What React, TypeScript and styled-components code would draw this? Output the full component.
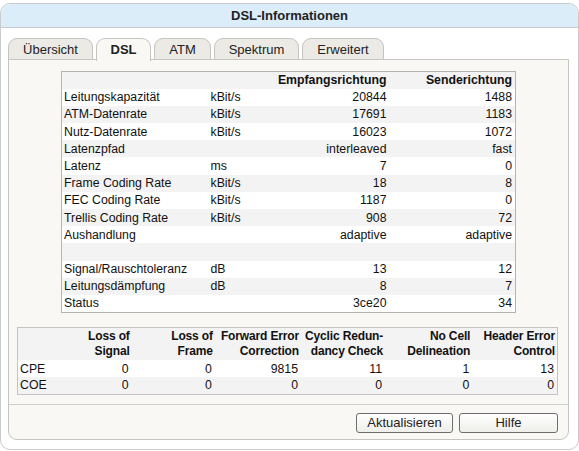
import React from "react";
import styled, { createGlobalStyle } from "styled-components";

const Global = createGlobalStyle`
  html, body { margin: 0; padding: 0; background: #ffffff; }
  body { font-family: "Liberation Sans", Arial, sans-serif; color: #111; }
`;

const Frame = styled.div`
  box-sizing: border-box;
  margin-top: 3px;
  width: 579px;
  height: 447px;
  border: 1px solid #c9cbcc;
  border-radius: 10px;
  overflow: hidden;
  background: #ffffff;
  display: flex;
  flex-direction: column;
`;

const TitleBar = styled.div`
  height: 23px;
  background: #dcedfa;
  border-bottom: 1px solid #c4cdd3;
  display: flex;
  align-items: center;
  justify-content: center;
  font-weight: bold;
  font-size: 13px;
  color: #222;
`;

const Body = styled.div`
  padding: 10px 9px 0 7px;
  display: flex;
  flex-direction: column;
`;

const TabRow = styled.div`
  display: flex;
  gap: 3px;
  height: 22px;
  position: relative;
  z-index: 1;
`;

const Tab = styled.div<{ $w: number; $active?: boolean }>`
  box-sizing: border-box;
  width: ${(p) => p.$w}px;
  height: ${(p) => (p.$active ? 23 : 22)}px;
  border: 1px solid #c4c4c0;
  border-bottom: ${(p) => (p.$active ? "none" : "1px solid #c4c4c0")};
  border-radius: 9px 9px 0 0;
  background: ${(p) => (p.$active ? "#f9f8f4" : "#ebeae5")};
  font-size: 13px;
  font-weight: ${(p) => (p.$active ? "bold" : "normal")};
  color: #222;
  display: flex;
  align-items: center;
  justify-content: center;
  padding-bottom: ${(p) => (p.$active ? 1 : 0)}px;
`;

const Panel = styled.div`
  box-sizing: border-box;
  height: 381px;
  margin-top: -1px;
  border: 1px solid #c4c4c0;
  border-radius: 0 0 9px 9px;
  background: #f9f8f4;
  display: flex;
  flex-direction: column;
  padding-top: 11px;
`;

const InfoTable = styled.table`
  border-collapse: collapse;
  table-layout: fixed;
  width: 454px;
  margin-left: 52px;
  border: 1px solid #b4b4b4;
  font-size: 12.3px;
`;

const Row = styled.tr<{ $alt?: boolean; $h?: number }>`
  height: ${(p) => p.$h ?? 17}px;
  background: ${(p) => (p.$alt ? "#f3f3f3" : "#ffffff")};
`;

const Cell = styled.td<{ $right?: boolean; $bold?: boolean }>`
  padding: 0 2px 0 2px;
  padding-right: ${(p) => (p.$right ? 3 : 2)}px;
  text-align: ${(p) => (p.$right ? "right" : "left")};
  font-weight: ${(p) => (p.$bold ? "bold" : "normal")};
  white-space: nowrap;
  vertical-align: middle;
  line-height: 14px;
`;

const ErrTable = styled.table`
  border-collapse: collapse;
  table-layout: fixed;
  width: 541px;
  margin: 14px 0 0 8px;
  border: 1px solid #c4c4c4;
  font-size: 12.3px;
`;

const HeadCell = styled.th`
  padding: 0 2px 0 0;
  text-align: right;
  font-weight: bold;
  line-height: 14.5px;
  vertical-align: middle;
  white-space: nowrap;
  font-size: 12px;
  letter-spacing: -0.15px;
`;

const Separator = styled.div`
  height: 1px;
  background: #cfcfcb;
  margin-top: 9px;
`;

const ButtonBar = styled.div`
  display: flex;
  justify-content: flex-end;
  gap: 6px;
  padding: 8px 10px 0 0;
`;

const Button = styled.button<{ $w: number }>`
  box-sizing: border-box;
  width: ${(p) => p.$w}px;
  height: 20px;
  border: 1px solid #6f6f6f;
  border-radius: 3px;
  background: linear-gradient(#ffffff, #eeeeea);
  font-family: "Liberation Sans", Arial, sans-serif;
  font-size: 13px;
  color: #222;
  padding: 0;
  display: flex;
  align-items: center;
  justify-content: center;
`;

const rows: [string, string, string, string][] = [
  ["Leitungskapazität", "kBit/s", "20844", "1488"],
  ["ATM-Datenrate", "kBit/s", "17691", "1183"],
  ["Nutz-Datenrate", "kBit/s", "16023", "1072"],
  ["Latenzpfad", "", "interleaved", "fast"],
  ["Latenz", "ms", "7", "0"],
  ["Frame Coding Rate", "kBit/s", "18", "8"],
  ["FEC Coding Rate", "kBit/s", "1187", "0"],
  ["Trellis Coding Rate", "kBit/s", "908", "72"],
  ["Aushandlung", "", "adaptive", "adaptive"],
  ["", "", "", ""],
  ["Signal/Rauschtoleranz", "dB", "13", "12"],
  ["Leitungsdämpfung", "dB", "8", "7"],
  ["Status", "", "3ce20", "34"],
];

const errHeads: [string, string][] = [
  ["Loss of", "Signal"],
  ["Loss of", "Frame"],
  ["Forward Error", "Correction"],
  ["Cyclic Redun-", "dancy Check"],
  ["No Cell", "Delineation"],
  ["Header Error", "Control"],
];

const errRows: [string, string[]][] = [
  ["CPE", ["0", "0", "9815", "11", "1", "13"]],
  ["COE", ["0", "0", "0", "0", "0", "0"]],
];

const tabs: { label: string; w: number; active?: boolean }[] = [
  { label: "Übersicht", w: 85 },
  { label: "DSL", w: 55, active: true },
  { label: "ATM", w: 57 },
  { label: "Spektrum", w: 85 },
  { label: "Erweitert", w: 82 },
];

export default function App() {
  return (
    <>
      <Global />
      <Frame>
        <TitleBar>DSL-Informationen</TitleBar>
        <Body>
          <TabRow>
            {tabs.map((t) => (
              <Tab key={t.label} $w={t.w} $active={t.active}>
                {t.label}
              </Tab>
            ))}
          </TabRow>
          <Panel>
            <InfoTable>
              <colgroup>
                <col style={{ width: 147 }} />
                <col style={{ width: 60 }} />
                <col style={{ width: 121 }} />
                <col style={{ width: 126 }} />
              </colgroup>
              <tbody>
                <Row $alt $h={17.2}>
                  <Cell />
                  <Cell />
                  <Cell $right $bold>
                    Empfangsrichtung
                  </Cell>
                  <Cell $right $bold>
                    Senderichtung
                  </Cell>
                </Row>
                {rows.map((r, i) => (
                  <Row key={i} $alt={i % 2 === 1} $h={17.2}>
                    <Cell>{r[0]}</Cell>
                    <Cell>{r[1]}</Cell>
                    <Cell $right>{r[2]}</Cell>
                    <Cell $right>{r[3]}</Cell>
                  </Row>
                ))}
              </tbody>
            </InfoTable>
            <ErrTable>
              <colgroup>
                <col style={{ width: 30 }} />
                <col style={{ width: 84 }} />
                <col style={{ width: 83 }} />
                <col style={{ width: 86 }} />
                <col style={{ width: 84 }} />
                <col style={{ width: 87 }} />
                <col style={{ width: 85 }} />
              </colgroup>
              <tbody>
                <Row $alt $h={33}>
                  <HeadCell />
                  {errHeads.map((h) => (
                    <HeadCell key={h[0] + h[1]}>
                      {h[0]}
                      <br />
                      {h[1]}
                    </HeadCell>
                  ))}
                </Row>
                {errRows.map(([label, vals], i) => (
                  <Row key={label} $alt={i === 1}>
                    <Cell>{label}</Cell>
                    {vals.map((v, j) => (
                      <Cell key={j} $right>
                        {v}
                      </Cell>
                    ))}
                  </Row>
                ))}
              </tbody>
            </ErrTable>
            <Separator />
            <ButtonBar>
              <Button $w={97}>Aktualisieren</Button>
              <Button $w={99}>Hilfe</Button>
            </ButtonBar>
          </Panel>
        </Body>
      </Frame>
    </>
  );
}
